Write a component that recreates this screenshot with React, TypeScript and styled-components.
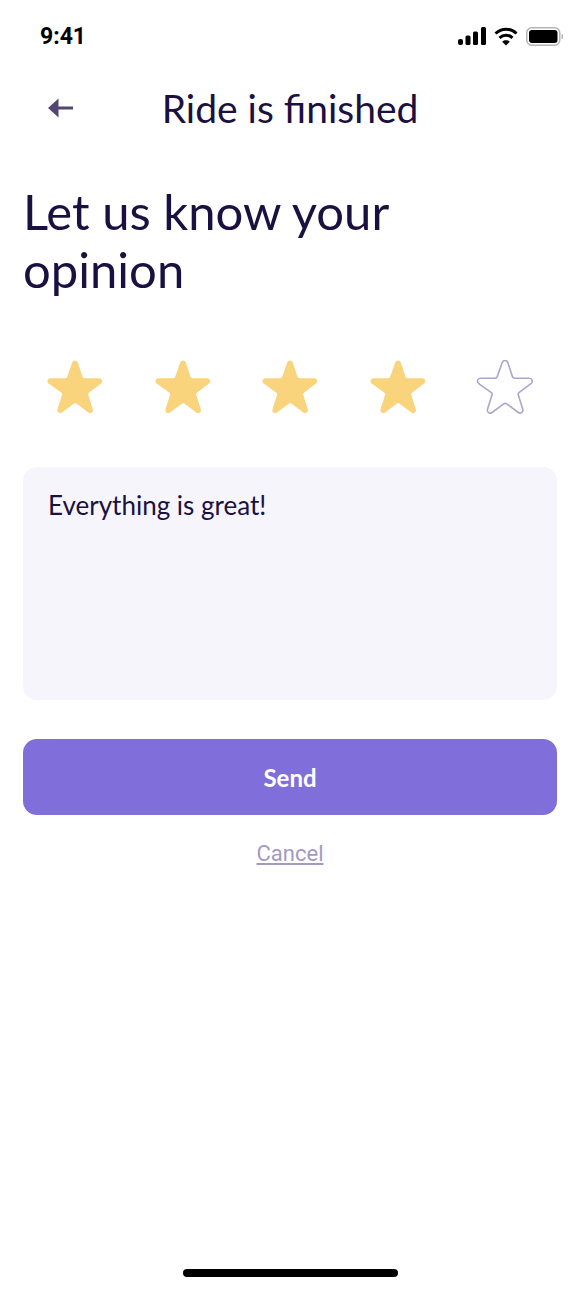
import React from 'react';
import styled, { createGlobalStyle } from 'styled-components';

const GlobalStyle = createGlobalStyle`
  html, body {
    margin: 0;
    padding: 0;
    background: #ffffff;
  }
  * {
    box-sizing: border-box;
  }
`;

const Screen = styled.div`
  width: 580px;
  height: 1291px;
  display: flex;
  flex-direction: column;
  font-family: 'Lato', 'Liberation Sans', sans-serif;
  color: #1b1140;
  background: #fff;
`;

const StatusBar = styled.div`
  height: 72px;
  padding: 0 16px 0 40px;
  display: flex;
  align-items: center;
  justify-content: space-between;
`;

const Time = styled.span`
  font-family: 'Roboto', 'Liberation Sans', sans-serif;
  font-size: 23px;
  font-weight: 700;
  color: #000;
`;

const StatusIcons = styled.div`
  display: flex;
  align-items: center;
  gap: 8px;
`;

const Header = styled.header`
  height: 72px;
  position: relative;
  display: flex;
  align-items: center;
  justify-content: center;
`;

const BackButton = styled.button`
  position: absolute;
  left: 47px;
  top: 25px;
  width: 26px;
  height: 22px;
  padding: 0;
  border: none;
  background: none;
  display: flex;
`;

const Title = styled.h1`
  margin: 0;
  font-size: 39px;
  font-weight: 400;
  line-height: 44px;
`;

const Content = styled.main`
  padding: 38px 23px 0;
  display: flex;
  flex-direction: column;
`;

const Heading = styled.h2`
  margin: 0;
  font-size: 49px;
  font-weight: 400;
  line-height: 58px;
`;

const Stars = styled.div`
  margin-top: 62px;
  padding: 0 23px;
  display: flex;
  justify-content: space-between;
`;

const Comment = styled.div`
  margin-top: 51px;
  height: 233px;
  padding: 23px 25px;
  border-radius: 14px;
  background: #f6f5fc;
  font-size: 26px;
  line-height: 30px;
`;

const SendButton = styled.button`
  margin-top: 39px;
  height: 76px;
  border: none;
  border-radius: 14px;
  background: #806fda;
  color: #fff;
  font-family: inherit;
  font-size: 24px;
  font-weight: 700;
`;

const CancelLink = styled.a`
  margin-top: 26px;
  align-self: center;
  font-family: 'Roboto', 'Liberation Sans', sans-serif;
  font-size: 22px;
  line-height: 26px;
  color: #a399c4;
  text-decoration: underline;
`;

const HomeBar = styled.div`
  margin-top: auto;
  margin-bottom: 14px;
  align-self: center;
  width: 215px;
  height: 8px;
  border-radius: 4px;
  background: #000;
`;

const starPath =
  'M26.2 2.6c1-2.9 4.6-2.9 5.6 0l4.6 14c.3 1 1.3 1.7 2.3 1.7h14.6c2.9 0 4 3.6 1.7 5.3l-11.8 8.8c-.9.6-1.2 1.7-.9 2.7l4.5 14.1c.9 2.8-2.2 5-4.5 3.3l-11.6-8.7c-.9-.6-2-.6-2.9 0l-11.8 8.7c-2.3 1.7-5.4-.5-4.5-3.3l4.5-14.1c.3-1 0-2.1-.9-2.7L2.7 23.6c-2.3-1.7-1.2-5.3 1.7-5.3h14.6c1 0 2-.7 2.3-1.7z';

const Star = ({ filled }: { filled: boolean }) => (
  <svg width="58" height="56" viewBox="0 0 58 56">
    <path
      d={starPath}
      fill={filled ? '#f9d47c' : 'none'}
      stroke={filled ? 'none' : '#aea5cc'}
      strokeWidth="1.6"
    />
  </svg>
);

const ratings = [true, true, true, true, false];

const App = () => (
  <Screen>
    <GlobalStyle />
    <StatusBar>
      <Time>9:41</Time>
      <StatusIcons>
        <svg width="28" height="18" viewBox="0 0 28 18" fill="#000">
          <rect x="0" y="12" width="5" height="6" rx="2" />
          <rect x="7.5" y="8.5" width="5" height="9.5" rx="1.5" />
          <rect x="15" y="4.5" width="5" height="13.5" rx="1.5" />
          <rect x="23" y="0" width="5" height="18" rx="1.5" />
        </svg>
        <svg width="24" height="19" viewBox="0 0 24 19" fill="none" stroke="#000" strokeWidth="3">
          <path d="M1.5 6.5C7.5 .8 16.5 .8 22.5 6.5" />
          <path d="M5.5 10.8C9.3 7.3 14.7 7.3 18.5 10.8" />
          <path d="M12 18.5 8.2 14.7C10.4 12.8 13.6 12.8 15.8 14.7Z" fill="#000" stroke="none" />
        </svg>
        <svg width="38" height="19" viewBox="0 0 38 19">
          <rect x=".75" y=".75" width="33" height="17.5" rx="5" fill="none" stroke="#b4b4b4" strokeWidth="1.5" />
          <rect x="3" y="3" width="28.5" height="13" rx="3" fill="#000" />
          <rect x="35.5" y="7" width="1.5" height="5" rx=".75" fill="#b4b4b4" />
        </svg>
      </StatusIcons>
    </StatusBar>
    <Header>
      <BackButton aria-label="Back">
        <svg width="26" height="22" viewBox="0 0 26 22" fill="none" stroke="#524672" strokeWidth="3">
          <path d="M5 11H26" />
          <path d="M11.5 1.5 1 11l10.500 9.500V1.500Z" fill="#524672" stroke="none" />
        </svg>
      </BackButton>
      <Title>Ride is finished</Title>
    </Header>
    <Content>
      <Heading>
        Let us know your
        <br />
        opinion
      </Heading>
      <Stars>
        {ratings.map((filled, i) => (
          <Star key={i} filled={filled} />
        ))}
      </Stars>
      <Comment>Everything is great!</Comment>
      <SendButton>Send</SendButton>
      <CancelLink>Cancel</CancelLink>
    </Content>
    <HomeBar />
  </Screen>
);

export default App;
